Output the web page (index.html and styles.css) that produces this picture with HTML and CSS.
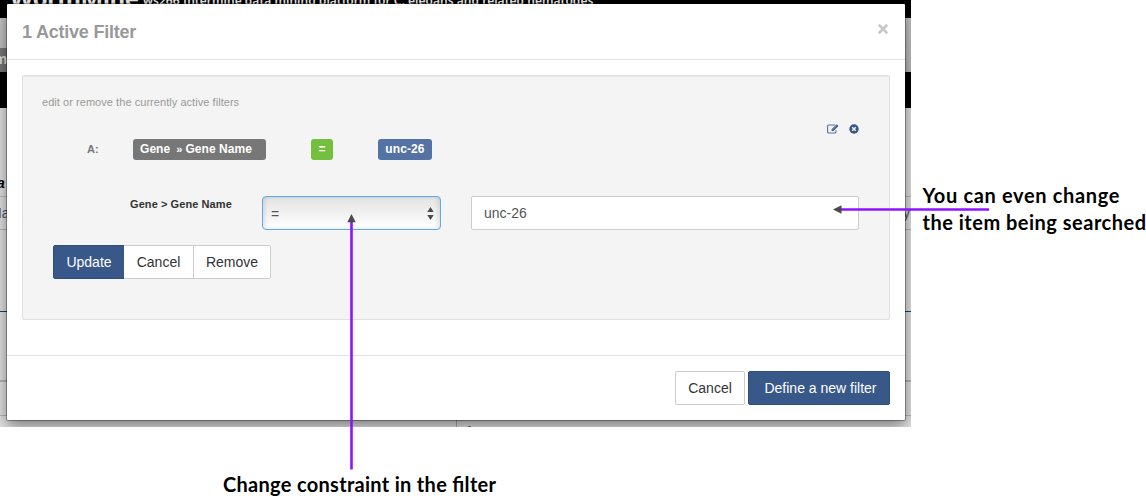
FILE: index.html
```html
<!DOCTYPE html>
<html lang="en">
<head>
<meta charset="utf-8">
<title>Active filters</title>
<link rel="stylesheet" href="styles.css">
</head>
<body>
<div class="figure">
  <div class="capture">
    <div class="page">
      <div class="masthead"><span class="brand">WormMine</span><span class="tagline">ws266 Intermine data mining platform for C. elegans and related nematodes</span></div>
      <div class="tabs"><span class="tab">m</span></div>
      <div class="strip"></div>
      <div class="content">
        <div class="heading">a</div>
        <div class="row first"><span>Ma</span><span class="tail">y</span></div>
        <div class="row second"></div>
        <div class="row third"></div>
        <div class="row fourth"></div>
        <div class="row fifth"><span class="cell"></span><span class="speck"></span></div>
      </div>
    </div>
    <div class="modal">
      <div class="modal-header">
        <h4 class="title">1 Active Filter</h4>
        <svg class="close" width="12" height="12" viewBox="0 0 12 12"><path d="M1.8 1.8L10.2 10.2M10.2 1.8L1.8 10.2"/></svg>
      </div>
      <div class="modal-body">
        <div class="well">
          <p class="hint">edit or remove the currently active filters</p>
          <div class="constraint">
            <span class="code">A:</span>
            <span class="label path"><span>Gene</span><span class="sep">»</span><span>Gene Name</span></span>
            <span class="label op">=</span>
            <span class="label value">unc-26</span>
            <span class="actions">
              <svg width="12" height="10" viewBox="0 0 12 10"><path class="line" d="M8.2 1H2Q.6 1 .6 2.3V7.7Q.6 9 2 9H7.7Q9 9 9 7.7V6.3"/><path class="fill" d="M4.6 5.3L9.2.8Q9.7.2 10.3.7L11 1.4Q11.4 1.9 11 2.4L6.4 7H4.6Z"/><path class="nick" d="M5.5 5.7L9.4 1.9"/></svg>
              <svg width="10" height="10" viewBox="0 0 10 10"><circle class="fill" cx="5" cy="5" r="4.7"/><path class="cross" d="M3.2 3.2L6.8 6.8M6.8 3.2L3.2 6.8"/></svg>
            </span>
          </div>
          <div class="editor">
            <span class="field-name">Gene &gt; Gene Name</span>
            <div class="select"><span>=</span><svg width="7" height="13" viewBox="0 0 7 13"><path d="M3.5 0L6.7 5H.3ZM3.5 13L.3 8H6.7Z"/></svg></div>
            <div class="input">unc-26</div>
          </div>
          <div class="group">
            <div class="btn primary update"><span>Update</span></div>
            <div class="btn cancel"><span>Cancel</span></div>
            <div class="btn remove"><span>Remove</span></div>
          </div>
        </div>
      </div>
      <div class="modal-footer">
        <div class="btn dismiss"><span>Cancel</span></div>
        <div class="btn primary define"><span>Define a new filter</span></div>
      </div>
    </div>
  </div>
  <svg class="notes" width="1146" height="496" viewBox="0 0 1146 496">
    <path class="arrow" d="M351.5 221V469.5M841 209.5H989"/>
    <path class="tip" d="M351.5 214L355.7 222.2H347.3ZM833 209.5L841.5 205.3V213.7Z"/>
    <text x="922.5" y="202.5" textLength="197">You can even change</text>
    <text x="922.5" y="229.5" textLength="223.5">the item being searched</text>
    <text x="223" y="491.5" textLength="273">Change constraint in the filter</text>
  </svg>
</div>
</body>
</html>
```
FILE: styles.css
```css
* { box-sizing: border-box; }
body { margin: 0; background: #fff; font: 14px "Liberation Sans", Arial, sans-serif; color: #333; overflow: hidden; }
.figure { position: relative; width: 1146px; height: 496px; overflow: hidden; }
.capture { position: relative; width: 911px; height: 427px; overflow: hidden; }

.page { height: 427px; background: #e2e2e2; }
.masthead { height: 18px; background: #000; color: #eee; display: flex; align-items: flex-start; overflow: hidden; white-space: nowrap; }
.brand { flex: none; margin: -16px 0 0 10px; width: 133px; font: bold 24px/28px "Open Sans", sans-serif; letter-spacing: -.5px; }
.tagline { margin-top: -7px; font: 600 12px/16px "Noto Sans", sans-serif; letter-spacing: .02px; }
.tabs { height: 54px; padding-top: 30px; background: linear-gradient(#c8c8c8, #bbb); }
.tab { display: block; width: 80px; height: 24px; background: #777; color: #ddd; font-size: 15px; line-height: 22px; font-weight: bold; text-indent: -6px; }
.strip { height: 36px; background: #000; }
.content { height: 319px; color: #555; }
.heading { height: 89px; padding-top: 67px; border-bottom: 1px solid #bbb; color: #000; font-size: 14px; font-weight: bold; font-style: italic; text-indent: -3px; }
.row { border-bottom: 1px solid #b5b5b5; }
.first { height: 33px; display: flex; justify-content: space-between; padding-top: 8px; text-indent: -10px; }
.tail { text-indent: 0; margin-right: 1px; }
.second { height: 82px; border-color: #1c3f7c; }
.third { height: 70px; border-bottom: 2px solid #b5b5b5; }
.fourth { height: 34px; }
.fifth { height: 11px; border: 0; padding-left: 456px; display: flex; align-items: flex-end; gap: 11px; }
.cell { width: 1px; height: 11px; background: #aaa; }
.speck { width: 3px; height: 1px; background: #778; }

.modal { position: absolute; left: 7px; top: 4px; width: 898px; height: 416px; background: #fff; border-radius: 1px; box-shadow: 0 0 0 1px rgba(0,0,0,.3), 0 5px 15px rgba(0,0,0,.5); }
.modal-header { height: 56px; padding: 0 16px 5px 15px; border-bottom: 1px solid #e2e2e2; display: flex; align-items: center; justify-content: space-between; }
.title { margin: 5px 0 0; font-size: 18px; line-height: 20px; letter-spacing: -.22px; color: #999; }
.close { fill: none; stroke: #c8c8c8; stroke-width: 2.7; }
.modal-body { padding: 15px 15px 35px 15px; }
.well { height: 245px; padding: 19px; border: 1px solid #e0e0e0; border-radius: 2px; background: #f4f4f4; box-shadow: inset 0 1px 1px rgba(0,0,0,.06); }
.hint { margin: 0; font-size: 11px; line-height: 15px; letter-spacing: .05px; color: #999; }
.constraint { display: flex; height: 21px; margin-top: 29px; font-weight: bold; font-size: 12px; }
.code { width: 91px; padding-left: 45px; font-size: 11px; line-height: 21px; color: #777; }
.label { height: 21px; border-radius: 3px; color: #fff; line-height: 20px; white-space: nowrap; }
.path { display: flex; width: 133px; padding-left: 7px; background: #777; letter-spacing: .05px; }
.sep { margin: 0 3px 0 6px; font-size: 11px; }
.op { width: 22px; margin-left: 45px; text-align: center; background: #75bf3f; }
.value { width: 54px; margin-left: 45px; text-align: center; background: #5572a4; letter-spacing: .1px; }
.actions { display: flex; gap: 10px; margin: -15px 0 0 395px; }
.line { fill: none; stroke: #5272a5; stroke-width: 1.1; }
.fill { fill: #365789; }
.nick { fill: none; stroke: #d6deea; stroke-width: .5; }
.cross { fill: none; stroke: #f4f4f4; stroke-width: 1.5; }
.editor { display: flex; height: 34px; margin-top: 36px; padding-left: 88px; }
.field-name { width: 132px; font-size: 11px; font-weight: bold; line-height: 17px; letter-spacing: .08px; color: #333; white-space: nowrap; }
.select { display: flex; align-items: center; justify-content: space-between; width: 179px; height: 34px; padding: 0 6px 0 8px; border: 1px solid #5cace9; border-radius: 4px; color: #555; background: linear-gradient(#e3e3e3, #fff); box-shadow: inset 3px 0 4px -1px rgba(0,0,0,.1), inset -3px 0 4px -1px rgba(0,0,0,.1); }
.select span { padding-top: 2px; }
.select svg { fill: #4a4a4a; }
.input { width: 388px; height: 34px; margin-left: 30px; padding-left: 12px; border: 1px solid #ccc; border-radius: 2px; background: #fff; line-height: 32px; color: #555; }
.group { display: flex; margin: 15px 0 0 11px; }
.btn { display: flex; align-items: center; justify-content: center; height: 34px; border: 1px solid #ccc; border-radius: 2px; background: #fff; color: #333; white-space: nowrap; }
.primary { background: #375889; border-color: #2f4d79; color: #fff; }
.update { width: 72px; border-radius: 2px 0 0 2px; }
.cancel { width: 70px; margin-left: -1px; border-left: 0; border-radius: 0; }
.remove { width: 78px; margin-left: -1px; border-radius: 0 2px 2px 0; }
.modal-footer { height: 65px; padding: 15px; border-top: 1px solid #e2e2e2; display: flex; justify-content: flex-end; gap: 3px; }
.dismiss { width: 70px; }
.define { width: 142px; padding-left: 3px; }

.notes { position: absolute; left: 0; top: 0; }
.notes text { font: bold 20px Lato, sans-serif; fill: #000; }
.arrow { fill: none; stroke: #9013fe; stroke-width: 2.6; }
.tip { fill: #4a4a4a; }
```
